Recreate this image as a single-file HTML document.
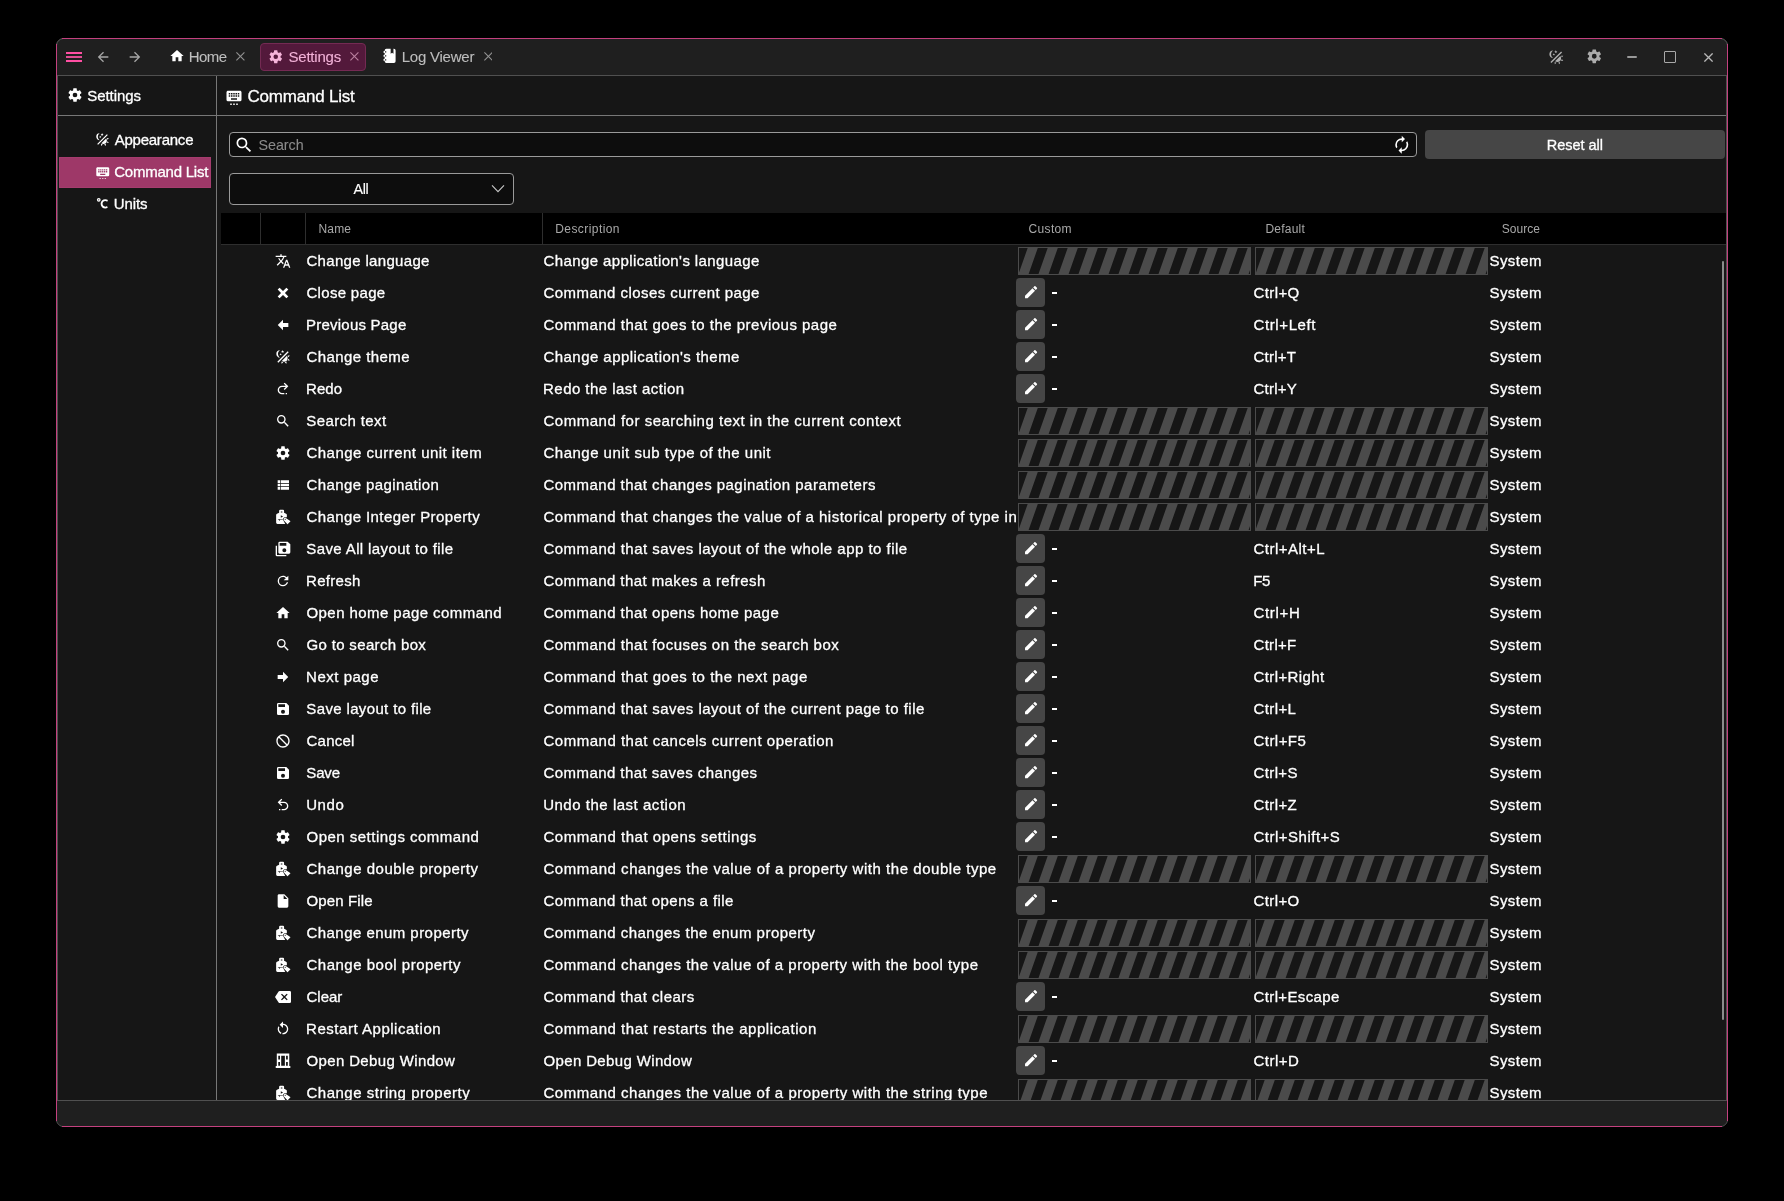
<!DOCTYPE html><html><head><meta charset="utf-8"><title>Settings</title><style>
*{box-sizing:border-box;margin:0;padding:0}
html,body{width:1784px;height:1201px;background:#000;overflow:hidden}
body{font-family:"Liberation Sans",sans-serif;font-size:15px;color:#fff;position:relative}
.abs{position:absolute}
svg.ic{position:absolute;display:block}
#win{position:absolute;left:56px;top:38px;width:1672px;height:1089px;border:1px solid #5c5c5c;border-radius:7.5px;background:#1f1f1f;overflow:hidden}
#winin{will-change:transform;position:absolute;left:-57px;top:-39px;width:1784px;height:1201px}
#content{position:absolute;left:57px;top:75px;width:1670px;height:1026px;background:#161616;border:1px solid #505050}
.hl{position:absolute;background:#777;height:1px}
.vl{position:absolute;background:#777;width:1px}
.t{position:absolute;white-space:nowrap;line-height:20px;height:20px;-webkit-text-stroke:0.3px currentColor}
.tab{position:absolute;top:43px;height:28px}
#thead{position:absolute;left:221px;top:213px;width:1505px;height:31px;background:#000}
#thead .t{font-size:12px;color:#a8a8a8;-webkit-text-stroke-width:0}
#thead i{position:absolute;top:0;width:1px;height:32px;background:#2e2e2e}
#tline{position:absolute;left:221px;top:244px;width:1505px;height:1px;background:#2e2e2e}
#rows{position:absolute;left:221px;top:245px;width:1505px;height:855px;overflow:hidden}
.r{position:absolute;left:0;width:1505px;height:32px}
.r .t{top:5.5px}
.r svg.ic{left:54px;top:8px}
.hb{position:absolute;top:2px;width:233px;height:28px;border:1px solid #4b4b4b;background:#161616;overflow:hidden}
.hb:before{content:"";position:absolute;left:-40px;top:0;width:340px;height:26px;transform-origin:0 100%;transform:skewX(-19.44deg);background:repeating-linear-gradient(90deg,#4b4b4b 0,#4b4b4b 9.1px,transparent 10.1px,transparent 19px,#4b4b4b 20px);}
.eb{position:absolute;left:795.1px;top:0.95px;width:29.3px;height:29.4px;border-radius:4px;background:#464646}
.eb svg.ic{left:6.6px;top:5.7px}
</style></head><body>
<div id="win"><div id="winin">
<div class="abs" style="left:66px;top:52px;width:16px;height:2px;background:#ff4fa3"></div>
<div class="abs" style="left:66px;top:56px;width:16px;height:2px;background:#e04c94"></div>
<div class="abs" style="left:66px;top:60px;width:16px;height:2px;background:#ff4fa3"></div>
<svg class="ic" style="width:16px;height:16px;left:95px;top:49.05px" viewBox="0 0 24 24"><path fill="#a6a6a6" fill-rule="evenodd" d="M20,11V13H8L13.5,18.5L12.08,19.92L4.16,12L12.08,4.08L13.5,5.5L8,11H20Z"/></svg>
<svg class="ic" style="width:16px;height:16px;left:126.75px;top:49.05px" viewBox="0 0 24 24"><path fill="#a6a6a6" fill-rule="evenodd" d="M4,11V13H16L10.5,18.5L11.92,19.92L19.84,12L11.92,4.08L10.5,5.5L16,11H4Z"/></svg>
<svg class="ic" style="width:16px;height:16px;left:168.9px;top:47.6px" viewBox="0 0 24 24"><path fill="#fff" fill-rule="evenodd" d="M10,20V14H14V20H19V12H22L12,3L2,12H5V20H10Z"/></svg>
<div class="t" style="left:188.85px;top:47px;letter-spacing:-0.599px;color:#bdbdbd;-webkit-text-stroke-width:0.1px">Home</div>
<svg class="ic" style="left:235.85px;top:52.10px;width:8.80px;height:8.80px" viewBox="0 0 8.80 8.80"><path d="M0.4,0.4L8.40,8.40M8.40,0.4L0.4,8.40" stroke="#929292" stroke-width="1.1" fill="none"/></svg>
<div class="abs" style="left:260px;top:43px;width:106px;height:28px;background:#53193b;border:1px solid #742a53;border-radius:4px"></div>
<svg class="ic" style="width:15.5px;height:15.5px;left:268.3px;top:48.6px" viewBox="0 0 24 24"><path fill="#f6b4da" fill-rule="evenodd" d="M12,15.5A3.5,3.5 0 0,1 8.5,12A3.5,3.5 0 0,1 12,8.5A3.5,3.5 0 0,1 15.5,12A3.5,3.5 0 0,1 12,15.5M19.43,12.97C19.47,12.65 19.5,12.33 19.5,12C19.5,11.67 19.47,11.34 19.43,11L21.54,9.37C21.73,9.22 21.78,8.95 21.66,8.73L19.66,5.27C19.54,5.05 19.27,4.96 19.05,5.05L16.56,6.05C16.04,5.66 15.5,5.32 14.87,5.07L14.5,2.42C14.46,2.18 14.25,2 14,2H10C9.75,2 9.54,2.18 9.5,2.42L9.13,5.07C8.5,5.32 7.96,5.66 7.44,6.05L4.95,5.05C4.73,4.96 4.46,5.05 4.34,5.27L2.34,8.73C2.21,8.95 2.27,9.22 2.46,9.37L4.57,11C4.53,11.34 4.5,11.67 4.5,12C4.5,12.33 4.53,12.65 4.57,12.97L2.46,14.63C2.27,14.78 2.21,15.05 2.34,15.27L4.34,18.73C4.46,18.95 4.73,19.03 4.95,18.95L7.44,17.94C7.96,18.34 8.5,18.68 9.13,18.93L9.5,21.58C9.54,21.82 9.75,22 10,22H14C14.25,22 14.46,21.82 14.5,21.58L14.87,18.93C15.5,18.67 16.04,18.34 16.56,17.94L19.05,18.95C19.27,19.03 19.54,18.95 19.66,18.73L21.66,15.27C21.78,15.05 21.73,14.78 21.54,14.63L19.43,12.97Z"/></svg>
<div class="t" style="left:288.43px;top:47px;letter-spacing:-0.193px;color:#f3b2d8;-webkit-text-stroke-width:0.1px">Settings</div>
<svg class="ic" style="left:349.80px;top:52.10px;width:8.80px;height:8.80px" viewBox="0 0 8.80 8.80"><path d="M0.4,0.4L8.40,8.40M8.40,0.4L0.4,8.40" stroke="#b9809f" stroke-width="1.1" fill="none"/></svg>
<svg class="ic" style="width:16px;height:16px;left:380.8px;top:48px" viewBox="0 0 24 24"><path fill="#fff" fill-rule="evenodd" d="M8,1.2H14.5V8.7L16.6,7.2L18.7,8.7V1.2H19.4A2.5,2.5 0 0,1 21.9,3.7V20A2.5,2.5 0 0,1 19.4,22.5H8A2.5,2.5 0 0,1 5.5,20V19.3H4.6A0.9,0.9 0 0,1 3.7,18.4V17.2A0.9,0.9 0 0,1 4.6,16.3H5.5V13.3H4.6A0.9,0.9 0 0,1 3.7,12.4V11.2A0.9,0.9 0 0,1 4.6,10.3H5.5V7.35H4.6A0.9,0.9 0 0,1 3.7,6.45V5.25A0.9,0.9 0 0,1 4.6,4.35H5.5V3.7A2.5,2.5 0 0,1 8,1.2ZM6,4.95H7.9V6.75H6ZM6,10.9H7.9V12.7H6ZM6,16.9H7.9V18.7H6Z"/></svg>
<div class="t" style="left:401.75px;top:47px;letter-spacing:-0.238px;color:#bdbdbd;-webkit-text-stroke-width:0.1px">Log Viewer</div>
<svg class="ic" style="left:483.60px;top:52.10px;width:8.80px;height:8.80px" viewBox="0 0 8.80 8.80"><path d="M0.4,0.4L8.40,8.40M8.40,0.4L0.4,8.40" stroke="#929292" stroke-width="1.1" fill="none"/></svg>
<svg class="ic" style="width:16.5px;height:16.5px;left:1547.7px;top:48.9px" viewBox="0 0 24 24"><path fill="#b0b0b0" fill-rule="evenodd" d="M7.5,2C5.71,3.15 4.5,5.18 4.5,7.5C4.5,9.82 5.71,11.85 7.53,13C4.46,13 2,10.54 2,7.5A5.5,5.5 0 0,1 7.5,2M19.07,3.5L20.5,4.93L4.93,20.5L3.5,19.07L19.07,3.5M12.89,5.93L11.41,5L9.97,6L10.39,4.3L9,3.24L10.75,3.12L11.33,1.47L12,3.1L13.73,3.13L12.38,4.26L12.89,5.93M9.59,9.54L8.43,8.81L7.31,9.59L7.65,8.27L6.56,7.44L7.92,7.35L8.37,6.06L8.88,7.33L10.24,7.36L9.19,8.23L9.59,9.54M19,13.5A5.5,5.5 0 0,1 13.5,19C12.28,19 11.15,18.6 10.24,17.93L17.93,10.24C18.6,11.15 19,12.28 19,13.5M14.6,20.08L17.37,18.93L17.13,22.28L14.6,20.08M18.93,17.38L20.08,14.61L22.28,17.15L18.93,17.38M20.08,12.42L18.94,9.64L22.28,9.88L20.08,12.42M9.63,18.93L12.4,20.08L9.87,22.27L9.63,18.93Z"/></svg>
<svg class="ic" style="width:16.5px;height:16.5px;left:1585.9px;top:48.2px" viewBox="0 0 24 24"><path fill="#acacac" fill-rule="evenodd" d="M12,15.5A3.5,3.5 0 0,1 8.5,12A3.5,3.5 0 0,1 12,8.5A3.5,3.5 0 0,1 15.5,12A3.5,3.5 0 0,1 12,15.5M19.43,12.97C19.47,12.65 19.5,12.33 19.5,12C19.5,11.67 19.47,11.34 19.43,11L21.54,9.37C21.73,9.22 21.78,8.95 21.66,8.73L19.66,5.27C19.54,5.05 19.27,4.96 19.05,5.05L16.56,6.05C16.04,5.66 15.5,5.32 14.87,5.07L14.5,2.42C14.46,2.18 14.25,2 14,2H10C9.75,2 9.54,2.18 9.5,2.42L9.13,5.07C8.5,5.32 7.96,5.66 7.44,6.05L4.95,5.05C4.73,4.96 4.46,5.05 4.34,5.27L2.34,8.73C2.21,8.95 2.27,9.22 2.46,9.37L4.57,11C4.53,11.34 4.5,11.67 4.5,12C4.5,12.33 4.53,12.65 4.57,12.97L2.46,14.63C2.27,14.78 2.21,15.05 2.34,15.27L4.34,18.73C4.46,18.95 4.73,19.03 4.95,18.95L7.44,17.94C7.96,18.34 8.5,18.68 9.13,18.93L9.5,21.58C9.54,21.82 9.75,22 10,22H14C14.25,22 14.46,21.82 14.5,21.58L14.87,18.93C15.5,18.67 16.04,18.34 16.56,17.94L19.05,18.95C19.27,19.03 19.54,18.95 19.66,18.73L21.66,15.27C21.78,15.05 21.73,14.78 21.54,14.63L19.43,12.97Z"/></svg>
<div class="abs" style="left:1627px;top:55.9px;width:10px;height:2px;background:#999;border-radius:1px"></div>
<div class="abs" style="left:1663.9px;top:50.9px;width:12.2px;height:12.2px;border:1.2px solid #a8a8a8;border-radius:1px"></div>
<svg class="ic" style="left:1704.00px;top:52.75px;width:9.00px;height:9.00px" viewBox="0 0 9.00 9.00"><path d="M0.4,0.4L8.60,8.60M8.60,0.4L0.4,8.60" stroke="#b8b8b8" stroke-width="1.3" fill="none"/></svg>
<div id="content"></div>
<div class="hl" style="left:58px;top:115px;width:1668px"></div>
<div class="vl" style="left:216px;top:76px;height:1024px"></div>
<svg class="ic" style="width:16px;height:16px;left:67px;top:87px" viewBox="0 0 24 24"><path fill="#fff" fill-rule="evenodd" d="M12,15.5A3.5,3.5 0 0,1 8.5,12A3.5,3.5 0 0,1 12,8.5A3.5,3.5 0 0,1 15.5,12A3.5,3.5 0 0,1 12,15.5M19.43,12.97C19.47,12.65 19.5,12.33 19.5,12C19.5,11.67 19.47,11.34 19.43,11L21.54,9.37C21.73,9.22 21.78,8.95 21.66,8.73L19.66,5.27C19.54,5.05 19.27,4.96 19.05,5.05L16.56,6.05C16.04,5.66 15.5,5.32 14.87,5.07L14.5,2.42C14.46,2.18 14.25,2 14,2H10C9.75,2 9.54,2.18 9.5,2.42L9.13,5.07C8.5,5.32 7.96,5.66 7.44,6.05L4.95,5.05C4.73,4.96 4.46,5.05 4.34,5.27L2.34,8.73C2.21,8.95 2.27,9.22 2.46,9.37L4.57,11C4.53,11.34 4.5,11.67 4.5,12C4.5,12.33 4.53,12.65 4.57,12.97L2.46,14.63C2.27,14.78 2.21,15.05 2.34,15.27L4.34,18.73C4.46,18.95 4.73,19.03 4.95,18.95L7.44,17.94C7.96,18.34 8.5,18.68 9.13,18.93L9.5,21.58C9.54,21.82 9.75,22 10,22H14C14.25,22 14.46,21.82 14.5,21.58L14.87,18.93C15.5,18.67 16.04,18.34 16.56,17.94L19.05,18.95C19.27,19.03 19.54,18.95 19.66,18.73L21.66,15.27C21.78,15.05 21.73,14.78 21.54,14.63L19.43,12.97Z"/></svg>
<div class="t" style="left:87.23px;top:86px;letter-spacing:-0.054px;">Settings</div>
<div class="abs" style="left:58.6px;top:156.5px;width:152.4px;height:31px;background:#9e3868;box-shadow:inset 0 0 0 1px #a53c6e"></div>
<svg class="ic" style="width:15px;height:15px;left:94.75px;top:132.2px" viewBox="0 0 24 24"><path fill="#fff" fill-rule="evenodd" d="M7.5,2C5.71,3.15 4.5,5.18 4.5,7.5C4.5,9.82 5.71,11.85 7.53,13C4.46,13 2,10.54 2,7.5A5.5,5.5 0 0,1 7.5,2M19.07,3.5L20.5,4.93L4.93,20.5L3.5,19.07L19.07,3.5M12.89,5.93L11.41,5L9.97,6L10.39,4.3L9,3.24L10.75,3.12L11.33,1.47L12,3.1L13.73,3.13L12.38,4.26L12.89,5.93M9.59,9.54L8.43,8.81L7.31,9.59L7.65,8.27L6.56,7.44L7.92,7.35L8.37,6.06L8.88,7.33L10.24,7.36L9.19,8.23L9.59,9.54M19,13.5A5.5,5.5 0 0,1 13.5,19C12.28,19 11.15,18.6 10.24,17.93L17.93,10.24C18.6,11.15 19,12.28 19,13.5M14.6,20.08L17.37,18.93L17.13,22.28L14.6,20.08M18.93,17.38L20.08,14.61L22.28,17.15L18.93,17.38M20.08,12.42L18.94,9.64L22.28,9.88L20.08,12.42M9.63,18.93L12.4,20.08L9.87,22.27L9.63,18.93Z"/></svg>
<div class="t" style="left:114.65px;top:130px;letter-spacing:-0.228px;">Appearance</div>
<svg class="ic" style="width:15.5px;height:15.5px;left:94.7px;top:163.75px" viewBox="0 0 24 24"><path fill="#fff" fill-rule="evenodd" d="M19,10H17V8H19M19,13H17V11H19M16,10H14V8H16M16,13H14V11H16M16,17H8V15H16M7,10H5V8H7M7,13H5V11H7M8,11H10V13H8M8,8H10V10H8M11,11H13V13H11M11,8H13V10H11M20,5H4C2.89,5 2,5.89 2,7V17A2,2 0 0,0 4,19H20A2,2 0 0,0 22,17V7C22,5.89 21.1,5 20,5M7,22H9V24H7V22M11,22H13V24H11V22M15,22H17V24H15V22Z"/></svg>
<div class="t" style="left:114.28px;top:162px;letter-spacing:-0.235px;">Command List</div>
<svg class="ic" style="width:15px;height:15px;left:95.1px;top:196.1px" viewBox="0 0 24 24"><path fill="#fff" fill-rule="evenodd" d="M16.5,5C18.05,5 19.5,5.47 20.69,6.28L19.53,9.17C18.73,8.44 17.67,8 16.5,8C14,8 12,10 12,12.5C12,15 14,17 16.5,17C17.53,17 18.47,16.66 19.23,16.08L20.37,18.93C19.24,19.61 17.92,20 16.5,20A7.5,7.5 0 0,1 9,12.5A7.5,7.5 0 0,1 16.5,5M6,3A3,3 0 0,1 9,6A3,3 0 0,1 6,9A3,3 0 0,1 3,6A3,3 0 0,1 6,3M6,5A1,1 0 0,0 5,6A1,1 0 0,0 6,7A1,1 0 0,0 7,6A1,1 0 0,0 6,5Z"/></svg>
<div class="t" style="left:113.84px;top:194px;letter-spacing:-0.127px;">Units</div>
<svg class="ic" style="width:18px;height:18px;left:225px;top:86.5px" viewBox="0 0 24 24"><path fill="#fff" fill-rule="evenodd" d="M19,10H17V8H19M19,13H17V11H19M16,10H14V8H16M16,13H14V11H16M16,17H8V15H16M7,10H5V8H7M7,13H5V11H7M8,11H10V13H8M8,8H10V10H8M11,11H13V13H11M11,8H13V10H11M20,5H4C2.89,5 2,5.89 2,7V17A2,2 0 0,0 4,19H20A2,2 0 0,0 22,17V7C22,5.89 21.1,5 20,5M7,22H9V24H7V22M11,22H13V24H11V22M15,22H17V24H15V22Z"/></svg>
<div class="t" style="left:247.45px;top:87px;letter-spacing:-0.207px;font-size:17px">Command List</div>
<div class="abs" style="left:229px;top:132px;width:1188px;height:25px;background:#0d0d0d;border:1px solid #9a9a9a;border-radius:4px"></div>
<svg class="ic" style="width:20px;height:20px;left:233.8px;top:134.9px" viewBox="0 0 24 24"><path fill="#fff" fill-rule="evenodd" d="M9.5,3A6.5,6.5 0 0,1 16,9.5C16,11.11 15.41,12.59 14.44,13.73L14.71,14H15.5L20.5,19L19,20.5L14,15.5V14.71L13.73,14.44C12.59,15.41 11.11,16 9.5,16A6.5,6.5 0 0,1 3,9.5A6.5,6.5 0 0,1 9.5,3M9.5,5C7,5 5,7 5,9.5C5,12 7,14 9.5,14C12,14 14,12 14,9.5C14,7 12,5 9.5,5Z"/></svg>
<div class="t" style="left:258.57px;top:134.5px;letter-spacing:-0.053px;font-size:14.3px;color:#8a8a8a;-webkit-text-stroke-width:0.1px">Search</div>
<svg class="ic" style="width:19.5px;height:19.5px;left:1392.3px;top:135.2px" viewBox="0 0 24 24"><path fill="#fff" fill-rule="evenodd" d="M12,6V9L16,5L12,1V4A8,8 0 0,0 4,12C4,13.57 4.46,15.03 5.24,16.26L6.7,14.8C6.25,13.97 6,13 6,12A6,6 0 0,1 12,6M18.76,7.74L17.3,9.2C17.74,10.04 18,11 18,12A6,6 0 0,1 12,18V15L8,19L12,23V20A8,8 0 0,0 20,12C20,10.43 19.54,8.97 18.76,7.74Z"/></svg>
<div class="abs" style="left:1425.1px;top:130.3px;width:300.4px;height:29.2px;background:#464646;border-radius:4px"></div>
<div class="t" style="left:1546.68px;top:134.5px;letter-spacing:-0.013px;font-size:14.5px">Reset all</div>
<div class="abs" style="left:229px;top:173px;width:285px;height:32px;background:#0d0d0d;border:1px solid #9a9a9a;border-radius:4px"></div>
<div class="t" style="left:353.45px;top:179px;letter-spacing:-0.325px;font-size:14.3px;-webkit-text-stroke-width:0.15px">All</div>
<svg class="ic" style="left:490px;top:183px;width:16px;height:12px" viewBox="0 0 16 12"><path d="M2,2.3L8,8.6L14,2.3" stroke="#c8c8c8" stroke-width="1.1" fill="none"/></svg>
<div id="thead"><i style="left:39px"></i><i style="left:84px"></i><i style="left:321px"></i>
<div class="t" style="left:97.39px;top:5.5px;letter-spacing:0.210px;">Name</div>
<div class="t" style="left:334.29px;top:5.5px;letter-spacing:0.417px;">Description</div>
<div class="t" style="left:807.58px;top:5.5px;letter-spacing:0.321px;">Custom</div>
<div class="t" style="left:1044.49px;top:5.5px;letter-spacing:0.201px;">Default</div>
<div class="t" style="left:1280.64px;top:5.5px;letter-spacing:0.061px;">Source</div>
</div><div id="tline"></div>
<div id="rows">
<div class="r" style="top:0px">
<svg class="ic" style="width:16px;height:16px;" viewBox="0 0 24 24"><path fill="#fff" fill-rule="evenodd" d="M12.87,15.07L10.33,12.56L10.36,12.53C12.1,10.59 13.34,8.36 14.07,6H17V4H10V2H8V4H1V6H12.17C11.5,7.92 10.44,9.75 9,11.35C8.07,10.32 7.3,9.19 6.69,8H4.69C5.42,9.63 6.42,11.17 7.67,12.56L2.58,17.58L4,19L9,14L12.11,17.11L12.87,15.07M18.5,10H16.5L12,22H14L15.12,19H19.87L21,22H23L18.5,10M15.88,17L17.5,12.67L19.12,17H15.88Z"/></svg>
<div class="t" style="left:85.48px;top:5.5px;letter-spacing:0.321px;">Change language</div>
<div class="t" style="left:322.48px;top:5.5px;letter-spacing:0.401px;width:472.52px;overflow:hidden">Change application's language</div>
<div class="hb" style="left:797px"></div><div class="hb" style="left:1034px"></div>
<div class="t" style="left:1268.53px;top:5.5px;letter-spacing:0.399px;">System</div>
</div>
<div class="r" style="top:32px">
<svg class="ic" style="width:16px;height:16px;" viewBox="0 0 24 24"><path fill="#fff" fill-rule="evenodd" d="M20 6.91L17.09 4L12 9.09L6.91 4L4 6.91L9.09 12L4 17.09L6.91 20L12 14.91L17.09 20L20 17.09L14.91 12L20 6.91Z"/></svg>
<div class="t" style="left:85.48px;top:5.5px;letter-spacing:0.313px;">Close page</div>
<div class="t" style="left:322.48px;top:5.5px;letter-spacing:0.451px;width:472.52px;overflow:hidden">Command closes current page</div>
<div class="eb"><svg class="ic" style="width:16.2px;height:16.2px;" viewBox="0 0 24 24"><path fill="#fff" fill-rule="evenodd" d="M20.71,7.04C21.1,6.65 21.1,6 20.71,5.63L18.37,3.29C18,2.9 17.35,2.9 16.96,3.29L15.12,5.12L18.87,8.87M3,17.25V21H6.75L17.81,9.93L14.06,6.18L3,17.25Z"/></svg></div>
<div class="abs" style="left:831px;top:15.3px;width:5.3px;height:1.6px;background:#fff"></div>
<div class="t" style="left:1032.53px;top:5.5px;letter-spacing:0.402px;">Ctrl+Q</div>
<div class="t" style="left:1268.53px;top:5.5px;letter-spacing:0.399px;">System</div>
</div>
<div class="r" style="top:64px">
<svg class="ic" style="width:16px;height:16px;" viewBox="0 0 24 24"><path fill="#fff" fill-rule="evenodd" d="M20,9V15H12V19.84L4.16,12L12,4.16V9H20Z"/></svg>
<div class="t" style="left:85.10px;top:5.5px;letter-spacing:0.218px;">Previous Page</div>
<div class="t" style="left:322.48px;top:5.5px;letter-spacing:0.493px;width:472.52px;overflow:hidden">Command that goes to the previous page</div>
<div class="eb"><svg class="ic" style="width:16.2px;height:16.2px;" viewBox="0 0 24 24"><path fill="#fff" fill-rule="evenodd" d="M20.71,7.04C21.1,6.65 21.1,6 20.71,5.63L18.37,3.29C18,2.9 17.35,2.9 16.96,3.29L15.12,5.12L18.87,8.87M3,17.25V21H6.75L17.81,9.93L14.06,6.18L3,17.25Z"/></svg></div>
<div class="abs" style="left:831px;top:15.3px;width:5.3px;height:1.6px;background:#fff"></div>
<div class="t" style="left:1032.53px;top:5.5px;letter-spacing:0.607px;">Ctrl+Left</div>
<div class="t" style="left:1268.53px;top:5.5px;letter-spacing:0.399px;">System</div>
</div>
<div class="r" style="top:96px">
<svg class="ic" style="width:16px;height:16px;" viewBox="0 0 24 24"><path fill="#fff" fill-rule="evenodd" d="M7.5,2C5.71,3.15 4.5,5.18 4.5,7.5C4.5,9.82 5.71,11.85 7.53,13C4.46,13 2,10.54 2,7.5A5.5,5.5 0 0,1 7.5,2M19.07,3.5L20.5,4.93L4.93,20.5L3.5,19.07L19.07,3.5M12.89,5.93L11.41,5L9.97,6L10.39,4.3L9,3.24L10.75,3.12L11.33,1.47L12,3.1L13.73,3.13L12.38,4.26L12.89,5.93M9.59,9.54L8.43,8.81L7.31,9.59L7.65,8.27L6.56,7.44L7.92,7.35L8.37,6.06L8.88,7.33L10.24,7.36L9.19,8.23L9.59,9.54M19,13.5A5.5,5.5 0 0,1 13.5,19C12.28,19 11.15,18.6 10.24,17.93L17.93,10.24C18.6,11.15 19,12.28 19,13.5M14.6,20.08L17.37,18.93L17.13,22.28L14.6,20.08M18.93,17.38L20.08,14.61L22.28,17.15L18.93,17.38M20.08,12.42L18.94,9.64L22.28,9.88L20.08,12.42M9.63,18.93L12.4,20.08L9.87,22.27L9.63,18.93Z"/></svg>
<div class="t" style="left:85.48px;top:5.5px;letter-spacing:0.423px;">Change theme</div>
<div class="t" style="left:322.48px;top:5.5px;letter-spacing:0.453px;width:472.52px;overflow:hidden">Change application's theme</div>
<div class="eb"><svg class="ic" style="width:16.2px;height:16.2px;" viewBox="0 0 24 24"><path fill="#fff" fill-rule="evenodd" d="M20.71,7.04C21.1,6.65 21.1,6 20.71,5.63L18.37,3.29C18,2.9 17.35,2.9 16.96,3.29L15.12,5.12L18.87,8.87M3,17.25V21H6.75L17.81,9.93L14.06,6.18L3,17.25Z"/></svg></div>
<div class="abs" style="left:831px;top:15.3px;width:5.3px;height:1.6px;background:#fff"></div>
<div class="t" style="left:1032.53px;top:5.5px;letter-spacing:0.241px;">Ctrl+T</div>
<div class="t" style="left:1268.53px;top:5.5px;letter-spacing:0.399px;">System</div>
</div>
<div class="r" style="top:128px">
<svg class="ic" style="width:16px;height:16px;" viewBox="0 0 24 24"><path fill="#fff" fill-rule="evenodd" d="M10.5,7A6.5,6.5 0 0,0 4,13.5A6.5,6.5 0 0,0 10.5,20H14V18H10.5C8,18 6,16 6,13.5C6,11 8,9 10.5,9H16.17L13.09,12.09L14.5,13.5L20,8L14.5,2.5L13.08,3.91L16.17,7H10.5M18,18H16V20H18V18Z"/></svg>
<div class="t" style="left:85.10px;top:5.5px;letter-spacing:0.006px;">Redo</div>
<div class="t" style="left:322.10px;top:5.5px;letter-spacing:0.448px;width:472.90px;overflow:hidden">Redo the last action</div>
<div class="eb"><svg class="ic" style="width:16.2px;height:16.2px;" viewBox="0 0 24 24"><path fill="#fff" fill-rule="evenodd" d="M20.71,7.04C21.1,6.65 21.1,6 20.71,5.63L18.37,3.29C18,2.9 17.35,2.9 16.96,3.29L15.12,5.12L18.87,8.87M3,17.25V21H6.75L17.81,9.93L14.06,6.18L3,17.25Z"/></svg></div>
<div class="abs" style="left:831px;top:15.3px;width:5.3px;height:1.6px;background:#fff"></div>
<div class="t" style="left:1032.53px;top:5.5px;letter-spacing:0.214px;">Ctrl+Y</div>
<div class="t" style="left:1268.53px;top:5.5px;letter-spacing:0.399px;">System</div>
</div>
<div class="r" style="top:160px">
<svg class="ic" style="width:16px;height:16px;" viewBox="0 0 24 24"><path fill="#fff" fill-rule="evenodd" d="M9.5,3A6.5,6.5 0 0,1 16,9.5C16,11.11 15.41,12.59 14.44,13.73L14.71,14H15.5L20.5,19L19,20.5L14,15.5V14.71L13.73,14.44C12.59,15.41 11.11,16 9.5,16A6.5,6.5 0 0,1 3,9.5A6.5,6.5 0 0,1 9.5,3M9.5,5C7,5 5,7 5,9.5C5,12 7,14 9.5,14C12,14 14,12 14,9.5C14,7 12,5 9.5,5Z"/></svg>
<div class="t" style="left:85.33px;top:5.5px;letter-spacing:0.397px;">Search text</div>
<div class="t" style="left:322.48px;top:5.5px;letter-spacing:0.511px;width:472.52px;overflow:hidden">Command for searching text in the current context</div>
<div class="hb" style="left:797px"></div><div class="hb" style="left:1034px"></div>
<div class="t" style="left:1268.53px;top:5.5px;letter-spacing:0.399px;">System</div>
</div>
<div class="r" style="top:192px">
<svg class="ic" style="width:16px;height:16px;" viewBox="0 0 24 24"><path fill="#fff" fill-rule="evenodd" d="M12,15.5A3.5,3.5 0 0,1 8.5,12A3.5,3.5 0 0,1 12,8.5A3.5,3.5 0 0,1 15.5,12A3.5,3.5 0 0,1 12,15.5M19.43,12.97C19.47,12.65 19.5,12.33 19.5,12C19.5,11.67 19.47,11.34 19.43,11L21.54,9.37C21.73,9.22 21.78,8.95 21.66,8.73L19.66,5.27C19.54,5.05 19.27,4.96 19.05,5.05L16.56,6.05C16.04,5.66 15.5,5.32 14.87,5.07L14.5,2.42C14.46,2.18 14.25,2 14,2H10C9.75,2 9.54,2.18 9.5,2.42L9.13,5.07C8.5,5.32 7.96,5.66 7.44,6.05L4.95,5.05C4.73,4.96 4.46,5.05 4.34,5.27L2.34,8.73C2.21,8.95 2.27,9.22 2.46,9.37L4.57,11C4.53,11.34 4.5,11.67 4.5,12C4.5,12.33 4.53,12.65 4.57,12.97L2.46,14.63C2.27,14.78 2.21,15.05 2.34,15.27L4.34,18.73C4.46,18.95 4.73,19.03 4.95,18.95L7.44,17.94C7.96,18.34 8.5,18.68 9.13,18.93L9.5,21.58C9.54,21.82 9.75,22 10,22H14C14.25,22 14.46,21.82 14.5,21.58L14.87,18.93C15.5,18.67 16.04,18.34 16.56,17.94L19.05,18.95C19.27,19.03 19.54,18.95 19.66,18.73L21.66,15.27C21.78,15.05 21.73,14.78 21.54,14.63L19.43,12.97Z"/></svg>
<div class="t" style="left:85.48px;top:5.5px;letter-spacing:0.474px;">Change current unit item</div>
<div class="t" style="left:322.48px;top:5.5px;letter-spacing:0.491px;width:472.52px;overflow:hidden">Change unit sub type of the unit</div>
<div class="hb" style="left:797px"></div><div class="hb" style="left:1034px"></div>
<div class="t" style="left:1268.53px;top:5.5px;letter-spacing:0.399px;">System</div>
</div>
<div class="r" style="top:224px">
<svg class="ic" style="width:16px;height:16px;" viewBox="0 0 24 24"><path fill="#fff" fill-rule="evenodd" d="M9,5V9H21V5M9,19H21V15H9M9,14H21V10H9M4,9H8V5H4M4,19H8V15H4M4,14H8V10H4V14Z"/></svg>
<div class="t" style="left:85.48px;top:5.5px;letter-spacing:0.399px;">Change pagination</div>
<div class="t" style="left:322.48px;top:5.5px;letter-spacing:0.469px;width:472.52px;overflow:hidden">Command that changes pagination parameters</div>
<div class="hb" style="left:797px"></div><div class="hb" style="left:1034px"></div>
<div class="t" style="left:1268.53px;top:5.5px;letter-spacing:0.399px;">System</div>
</div>
<div class="r" style="top:256px">
<svg class="ic" style="width:16px;height:16px;" viewBox="0 0 24 24"><path fill="#fff" fill-rule="evenodd" d="M7.8,1.3H12A1.6,1.6 0 0,1 13.6,2.9V5.5L16.6,7A2,2 0 0,1 17.8,8.8V12.2L14.7,12.5A3.1,3.1 0 0,0 12.6,17.4L15.4,22.4H3.7A2,2 0 0,1 1.7,20.4V9A2,2 0 0,1 3,7.2L6.2,5.5V2.9A1.6,1.6 0 0,1 7.8,1.3ZM8.7,3.8V5.1H11.1V3.8ZM8.7,9.3L12.1,11.2L8.7,13.1ZM4.4,15.2H12L11.7,16.3H7.7L6.6,18L5.6,16.3H4.4ZM15.7,13.1L22.9,18A0.6,0.6 0 0,1 22.95,18.9L19.2,22.6A0.6,0.6 0 0,1 18.3,22.6L13.7,17.7A2.7,2.7 0 0,1 15.7,13.1ZM15.4,14.6A0.85,0.85 0 1,0 15.4,16.3A0.85,0.85 0 1,0 15.4,14.6Z"/></svg>
<div class="t" style="left:85.48px;top:5.5px;letter-spacing:0.407px;">Change Integer Property</div>
<div class="t" style="left:322.48px;top:5.5px;letter-spacing:0.496px;width:472.52px;overflow:hidden">Command that changes the value of a historical property of type integer</div>
<div class="hb" style="left:797px"></div><div class="hb" style="left:1034px"></div>
<div class="t" style="left:1268.53px;top:5.5px;letter-spacing:0.399px;">System</div>
</div>
<div class="r" style="top:288px">
<svg class="ic" style="width:16px;height:16px;" viewBox="0 0 24 24"><path fill="#fff" fill-rule="evenodd" d="M17,7V3H7V7H17M14,17A3,3 0 0,0 17,14A3,3 0 0,0 14,11A3,3 0 0,0 11,14A3,3 0 0,0 14,17M19,1L23,5V17A2,2 0 0,1 21,19H7C5.89,19 5,18.1 5,17V3A2,2 0 0,1 7,1H19M1,7H3V21H17V23H3A2,2 0 0,1 1,21V7Z"/></svg>
<div class="t" style="left:85.33px;top:5.5px;letter-spacing:0.378px;">Save All layout to file</div>
<div class="t" style="left:322.48px;top:5.5px;letter-spacing:0.480px;width:472.52px;overflow:hidden">Command that saves layout of the whole app to file</div>
<div class="eb"><svg class="ic" style="width:16.2px;height:16.2px;" viewBox="0 0 24 24"><path fill="#fff" fill-rule="evenodd" d="M20.71,7.04C21.1,6.65 21.1,6 20.71,5.63L18.37,3.29C18,2.9 17.35,2.9 16.96,3.29L15.12,5.12L18.87,8.87M3,17.25V21H6.75L17.81,9.93L14.06,6.18L3,17.25Z"/></svg></div>
<div class="abs" style="left:831px;top:15.3px;width:5.3px;height:1.6px;background:#fff"></div>
<div class="t" style="left:1032.53px;top:5.5px;letter-spacing:0.478px;">Ctrl+Alt+L</div>
<div class="t" style="left:1268.53px;top:5.5px;letter-spacing:0.399px;">System</div>
</div>
<div class="r" style="top:320px">
<svg class="ic" style="width:16px;height:16px;" viewBox="0 0 24 24"><path fill="#fff" fill-rule="evenodd" d="M17.65,6.35C16.2,4.9 14.21,4 12,4A8,8 0 0,0 4,12A8,8 0 0,0 12,20C15.73,20 18.84,17.45 19.73,14H17.65C16.83,16.33 14.61,18 12,18A6,6 0 0,1 6,12A6,6 0 0,1 12,6C13.66,6 15.14,6.69 16.22,7.78L13,11H20V4L17.65,6.35Z"/></svg>
<div class="t" style="left:85.10px;top:5.5px;letter-spacing:0.287px;">Refresh</div>
<div class="t" style="left:322.48px;top:5.5px;letter-spacing:0.432px;width:472.52px;overflow:hidden">Command that makes a refresh</div>
<div class="eb"><svg class="ic" style="width:16.2px;height:16.2px;" viewBox="0 0 24 24"><path fill="#fff" fill-rule="evenodd" d="M20.71,7.04C21.1,6.65 21.1,6 20.71,5.63L18.37,3.29C18,2.9 17.35,2.9 16.96,3.29L15.12,5.12L18.87,8.87M3,17.25V21H6.75L17.81,9.93L14.06,6.18L3,17.25Z"/></svg></div>
<div class="abs" style="left:831px;top:15.3px;width:5.3px;height:1.6px;background:#fff"></div>
<div class="t" style="left:1032.15px;top:5.5px;letter-spacing:-0.341px;">F5</div>
<div class="t" style="left:1268.53px;top:5.5px;letter-spacing:0.399px;">System</div>
</div>
<div class="r" style="top:352px">
<svg class="ic" style="width:16px;height:16px;" viewBox="0 0 24 24"><path fill="#fff" fill-rule="evenodd" d="M10,20V14H14V20H19V12H22L12,3L2,12H5V20H10Z"/></svg>
<div class="t" style="left:85.51px;top:5.5px;letter-spacing:0.432px;">Open home page command</div>
<div class="t" style="left:322.48px;top:5.5px;letter-spacing:0.469px;width:472.52px;overflow:hidden">Command that opens home page</div>
<div class="eb"><svg class="ic" style="width:16.2px;height:16.2px;" viewBox="0 0 24 24"><path fill="#fff" fill-rule="evenodd" d="M20.71,7.04C21.1,6.65 21.1,6 20.71,5.63L18.37,3.29C18,2.9 17.35,2.9 16.96,3.29L15.12,5.12L18.87,8.87M3,17.25V21H6.75L17.81,9.93L14.06,6.18L3,17.25Z"/></svg></div>
<div class="abs" style="left:831px;top:15.3px;width:5.3px;height:1.6px;background:#fff"></div>
<div class="t" style="left:1032.53px;top:5.5px;letter-spacing:0.668px;">Ctrl+H</div>
<div class="t" style="left:1268.53px;top:5.5px;letter-spacing:0.399px;">System</div>
</div>
<div class="r" style="top:384px">
<svg class="ic" style="width:16px;height:16px;" viewBox="0 0 24 24"><path fill="#fff" fill-rule="evenodd" d="M9.5,3A6.5,6.5 0 0,1 16,9.5C16,11.11 15.41,12.59 14.44,13.73L14.71,14H15.5L20.5,19L19,20.5L14,15.5V14.71L13.73,14.44C12.59,15.41 11.11,16 9.5,16A6.5,6.5 0 0,1 3,9.5A6.5,6.5 0 0,1 9.5,3M9.5,5C7,5 5,7 5,9.5C5,12 7,14 9.5,14C12,14 14,12 14,9.5C14,7 12,5 9.5,5Z"/></svg>
<div class="t" style="left:85.47px;top:5.5px;letter-spacing:0.341px;">Go to search box</div>
<div class="t" style="left:322.48px;top:5.5px;letter-spacing:0.476px;width:472.52px;overflow:hidden">Command that focuses on the search box</div>
<div class="eb"><svg class="ic" style="width:16.2px;height:16.2px;" viewBox="0 0 24 24"><path fill="#fff" fill-rule="evenodd" d="M20.71,7.04C21.1,6.65 21.1,6 20.71,5.63L18.37,3.29C18,2.9 17.35,2.9 16.96,3.29L15.12,5.12L18.87,8.87M3,17.25V21H6.75L17.81,9.93L14.06,6.18L3,17.25Z"/></svg></div>
<div class="abs" style="left:831px;top:15.3px;width:5.3px;height:1.6px;background:#fff"></div>
<div class="t" style="left:1032.53px;top:5.5px;letter-spacing:0.299px;">Ctrl+F</div>
<div class="t" style="left:1268.53px;top:5.5px;letter-spacing:0.399px;">System</div>
</div>
<div class="r" style="top:416px">
<svg class="ic" style="width:16px;height:16px;" viewBox="0 0 24 24"><path fill="#fff" fill-rule="evenodd" d="M4,15V9H12V4.16L19.84,12L12,19.84V15H4Z"/></svg>
<div class="t" style="left:85.10px;top:5.5px;letter-spacing:0.505px;">Next page</div>
<div class="t" style="left:322.48px;top:5.5px;letter-spacing:0.513px;width:472.52px;overflow:hidden">Command that goes to the next page</div>
<div class="eb"><svg class="ic" style="width:16.2px;height:16.2px;" viewBox="0 0 24 24"><path fill="#fff" fill-rule="evenodd" d="M20.71,7.04C21.1,6.65 21.1,6 20.71,5.63L18.37,3.29C18,2.9 17.35,2.9 16.96,3.29L15.12,5.12L18.87,8.87M3,17.25V21H6.75L17.81,9.93L14.06,6.18L3,17.25Z"/></svg></div>
<div class="abs" style="left:831px;top:15.3px;width:5.3px;height:1.6px;background:#fff"></div>
<div class="t" style="left:1032.53px;top:5.5px;letter-spacing:0.388px;">Ctrl+Right</div>
<div class="t" style="left:1268.53px;top:5.5px;letter-spacing:0.399px;">System</div>
</div>
<div class="r" style="top:448px">
<svg class="ic" style="width:16px;height:16px;" viewBox="0 0 24 24"><path fill="#fff" fill-rule="evenodd" d="M15,9H5V5H15M12,19A3,3 0 0,1 9,16A3,3 0 0,1 12,13A3,3 0 0,1 15,16A3,3 0 0,1 12,19M17,3H5C3.89,3 3,3.9 3,5V19A2,2 0 0,0 5,21H19A2,2 0 0,0 21,19V7L17,3Z"/></svg>
<div class="t" style="left:85.33px;top:5.5px;letter-spacing:0.358px;">Save layout to file</div>
<div class="t" style="left:322.48px;top:5.5px;letter-spacing:0.477px;width:472.52px;overflow:hidden">Command that saves layout of the current page to file</div>
<div class="eb"><svg class="ic" style="width:16.2px;height:16.2px;" viewBox="0 0 24 24"><path fill="#fff" fill-rule="evenodd" d="M20.71,7.04C21.1,6.65 21.1,6 20.71,5.63L18.37,3.29C18,2.9 17.35,2.9 16.96,3.29L15.12,5.12L18.87,8.87M3,17.25V21H6.75L17.81,9.93L14.06,6.18L3,17.25Z"/></svg></div>
<div class="abs" style="left:831px;top:15.3px;width:5.3px;height:1.6px;background:#fff"></div>
<div class="t" style="left:1032.53px;top:5.5px;letter-spacing:0.386px;">Ctrl+L</div>
<div class="t" style="left:1268.53px;top:5.5px;letter-spacing:0.399px;">System</div>
</div>
<div class="r" style="top:480px">
<svg class="ic" style="width:16px;height:16px;" viewBox="0 0 24 24"><path fill="#fff" fill-rule="evenodd" d="M12,2C17.5,2 22,6.5 22,12C22,17.5 17.5,22 12,22C6.5,22 2,17.5 2,12C2,6.5 6.5,2 12,2M12,4C10.1,4 8.4,4.6 7.1,5.7L18.3,16.9C19.3,15.5 20,13.8 20,12C20,7.6 16.4,4 12,4M16.9,18.3L5.7,7.1C4.6,8.4 4,10.1 4,12C4,16.4 7.6,20 12,20C13.9,20 15.6,19.4 16.9,18.3Z"/></svg>
<div class="t" style="left:85.48px;top:5.5px;letter-spacing:0.254px;">Cancel</div>
<div class="t" style="left:322.48px;top:5.5px;letter-spacing:0.513px;width:472.52px;overflow:hidden">Command that cancels current operation</div>
<div class="eb"><svg class="ic" style="width:16.2px;height:16.2px;" viewBox="0 0 24 24"><path fill="#fff" fill-rule="evenodd" d="M20.71,7.04C21.1,6.65 21.1,6 20.71,5.63L18.37,3.29C18,2.9 17.35,2.9 16.96,3.29L15.12,5.12L18.87,8.87M3,17.25V21H6.75L17.81,9.93L14.06,6.18L3,17.25Z"/></svg></div>
<div class="abs" style="left:831px;top:15.3px;width:5.3px;height:1.6px;background:#fff"></div>
<div class="t" style="left:1032.53px;top:5.5px;letter-spacing:0.453px;">Ctrl+F5</div>
<div class="t" style="left:1268.53px;top:5.5px;letter-spacing:0.399px;">System</div>
</div>
<div class="r" style="top:512px">
<svg class="ic" style="width:16px;height:16px;" viewBox="0 0 24 24"><path fill="#fff" fill-rule="evenodd" d="M15,9H5V5H15M12,19A3,3 0 0,1 9,16A3,3 0 0,1 12,13A3,3 0 0,1 15,16A3,3 0 0,1 12,19M17,3H5C3.89,3 3,3.9 3,5V19A2,2 0 0,0 5,21H19A2,2 0 0,0 21,19V7L17,3Z"/></svg>
<div class="t" style="left:85.33px;top:5.5px;letter-spacing:-0.179px;">Save</div>
<div class="t" style="left:322.48px;top:5.5px;letter-spacing:0.439px;width:472.52px;overflow:hidden">Command that saves changes</div>
<div class="eb"><svg class="ic" style="width:16.2px;height:16.2px;" viewBox="0 0 24 24"><path fill="#fff" fill-rule="evenodd" d="M20.71,7.04C21.1,6.65 21.1,6 20.71,5.63L18.37,3.29C18,2.9 17.35,2.9 16.96,3.29L15.12,5.12L18.87,8.87M3,17.25V21H6.75L17.81,9.93L14.06,6.18L3,17.25Z"/></svg></div>
<div class="abs" style="left:831px;top:15.3px;width:5.3px;height:1.6px;background:#fff"></div>
<div class="t" style="left:1032.53px;top:5.5px;letter-spacing:0.376px;">Ctrl+S</div>
<div class="t" style="left:1268.53px;top:5.5px;letter-spacing:0.399px;">System</div>
</div>
<div class="r" style="top:544px">
<svg class="ic" style="width:16px;height:16px;" viewBox="0 0 24 24"><path fill="#fff" fill-rule="evenodd" d="M13.5,7A6.5,6.5 0 0,1 20,13.5A6.5,6.5 0 0,1 13.5,20H10V18H13.5C16,18 18,16 18,13.5C18,11 16,9 13.5,9H7.83L10.91,12.09L9.5,13.5L4,8L9.5,2.5L10.92,3.91L7.83,7H13.5M6,18H8V20H6V18Z"/></svg>
<div class="t" style="left:85.14px;top:5.5px;letter-spacing:0.654px;">Undo</div>
<div class="t" style="left:322.14px;top:5.5px;letter-spacing:0.523px;width:472.86px;overflow:hidden">Undo the last action</div>
<div class="eb"><svg class="ic" style="width:16.2px;height:16.2px;" viewBox="0 0 24 24"><path fill="#fff" fill-rule="evenodd" d="M20.71,7.04C21.1,6.65 21.1,6 20.71,5.63L18.37,3.29C18,2.9 17.35,2.9 16.96,3.29L15.12,5.12L18.87,8.87M3,17.25V21H6.75L17.81,9.93L14.06,6.18L3,17.25Z"/></svg></div>
<div class="abs" style="left:831px;top:15.3px;width:5.3px;height:1.6px;background:#fff"></div>
<div class="t" style="left:1032.53px;top:5.5px;letter-spacing:0.389px;">Ctrl+Z</div>
<div class="t" style="left:1268.53px;top:5.5px;letter-spacing:0.399px;">System</div>
</div>
<div class="r" style="top:576px">
<svg class="ic" style="width:16px;height:16px;" viewBox="0 0 24 24"><path fill="#fff" fill-rule="evenodd" d="M12,15.5A3.5,3.5 0 0,1 8.5,12A3.5,3.5 0 0,1 12,8.5A3.5,3.5 0 0,1 15.5,12A3.5,3.5 0 0,1 12,15.5M19.43,12.97C19.47,12.65 19.5,12.33 19.5,12C19.5,11.67 19.47,11.34 19.43,11L21.54,9.37C21.73,9.22 21.78,8.95 21.66,8.73L19.66,5.27C19.54,5.05 19.27,4.96 19.05,5.05L16.56,6.05C16.04,5.66 15.5,5.32 14.87,5.07L14.5,2.42C14.46,2.18 14.25,2 14,2H10C9.75,2 9.54,2.18 9.5,2.42L9.13,5.07C8.5,5.32 7.96,5.66 7.44,6.05L4.95,5.05C4.73,4.96 4.46,5.05 4.34,5.27L2.34,8.73C2.21,8.95 2.27,9.22 2.46,9.37L4.57,11C4.53,11.34 4.5,11.67 4.5,12C4.5,12.33 4.53,12.65 4.57,12.97L2.46,14.63C2.27,14.78 2.21,15.05 2.34,15.27L4.34,18.73C4.46,18.95 4.73,19.03 4.95,18.95L7.44,17.94C7.96,18.34 8.5,18.68 9.13,18.93L9.5,21.58C9.54,21.82 9.75,22 10,22H14C14.25,22 14.46,21.82 14.5,21.58L14.87,18.93C15.5,18.67 16.04,18.34 16.56,17.94L19.05,18.95C19.27,19.03 19.54,18.95 19.66,18.73L21.66,15.27C21.78,15.05 21.73,14.78 21.54,14.63L19.43,12.97Z"/></svg>
<div class="t" style="left:85.51px;top:5.5px;letter-spacing:0.488px;">Open settings command</div>
<div class="t" style="left:322.48px;top:5.5px;letter-spacing:0.522px;width:472.52px;overflow:hidden">Command that opens settings</div>
<div class="eb"><svg class="ic" style="width:16.2px;height:16.2px;" viewBox="0 0 24 24"><path fill="#fff" fill-rule="evenodd" d="M20.71,7.04C21.1,6.65 21.1,6 20.71,5.63L18.37,3.29C18,2.9 17.35,2.9 16.96,3.29L15.12,5.12L18.87,8.87M3,17.25V21H6.75L17.81,9.93L14.06,6.18L3,17.25Z"/></svg></div>
<div class="abs" style="left:831px;top:15.3px;width:5.3px;height:1.6px;background:#fff"></div>
<div class="t" style="left:1032.53px;top:5.5px;letter-spacing:0.498px;">Ctrl+Shift+S</div>
<div class="t" style="left:1268.53px;top:5.5px;letter-spacing:0.399px;">System</div>
</div>
<div class="r" style="top:608px">
<svg class="ic" style="width:16px;height:16px;" viewBox="0 0 24 24"><path fill="#fff" fill-rule="evenodd" d="M7.8,1.3H12A1.6,1.6 0 0,1 13.6,2.9V5.5L16.6,7A2,2 0 0,1 17.8,8.8V12.2L14.7,12.5A3.1,3.1 0 0,0 12.6,17.4L15.4,22.4H3.7A2,2 0 0,1 1.7,20.4V9A2,2 0 0,1 3,7.2L6.2,5.5V2.9A1.6,1.6 0 0,1 7.8,1.3ZM8.7,3.8V5.1H11.1V3.8ZM8.7,9.3L12.1,11.2L8.7,13.1ZM4.4,15.2H12L11.7,16.3H7.7L6.6,18L5.6,16.3H4.4ZM15.7,13.1L22.9,18A0.6,0.6 0 0,1 22.95,18.9L19.2,22.6A0.6,0.6 0 0,1 18.3,22.6L13.7,17.7A2.7,2.7 0 0,1 15.7,13.1ZM15.4,14.6A0.85,0.85 0 1,0 15.4,16.3A0.85,0.85 0 1,0 15.4,14.6Z"/></svg>
<div class="t" style="left:85.48px;top:5.5px;letter-spacing:0.504px;">Change double property</div>
<div class="t" style="left:322.48px;top:5.5px;letter-spacing:0.536px;width:472.52px;overflow:hidden">Command changes the value of a property with the double type</div>
<div class="hb" style="left:797px"></div><div class="hb" style="left:1034px"></div>
<div class="t" style="left:1268.53px;top:5.5px;letter-spacing:0.399px;">System</div>
</div>
<div class="r" style="top:640px">
<svg class="ic" style="width:16px;height:16px;" viewBox="0 0 24 24"><path fill="#fff" fill-rule="evenodd" d="M13,9V3.5L18.5,9M6,2C4.89,2 4,2.89 4,4V20A2,2 0 0,0 6,22H18A2,2 0 0,0 20,20V8L14,2H6Z"/></svg>
<div class="t" style="left:85.51px;top:5.5px;letter-spacing:0.128px;">Open File</div>
<div class="t" style="left:322.48px;top:5.5px;letter-spacing:0.444px;width:472.52px;overflow:hidden">Command that opens a file</div>
<div class="eb"><svg class="ic" style="width:16.2px;height:16.2px;" viewBox="0 0 24 24"><path fill="#fff" fill-rule="evenodd" d="M20.71,7.04C21.1,6.65 21.1,6 20.71,5.63L18.37,3.29C18,2.9 17.35,2.9 16.96,3.29L15.12,5.12L18.87,8.87M3,17.25V21H6.75L17.81,9.93L14.06,6.18L3,17.25Z"/></svg></div>
<div class="abs" style="left:831px;top:15.3px;width:5.3px;height:1.6px;background:#fff"></div>
<div class="t" style="left:1032.53px;top:5.5px;letter-spacing:0.402px;">Ctrl+O</div>
<div class="t" style="left:1268.53px;top:5.5px;letter-spacing:0.399px;">System</div>
</div>
<div class="r" style="top:672px">
<svg class="ic" style="width:16px;height:16px;" viewBox="0 0 24 24"><path fill="#fff" fill-rule="evenodd" d="M7.8,1.3H12A1.6,1.6 0 0,1 13.6,2.9V5.5L16.6,7A2,2 0 0,1 17.8,8.8V12.2L14.7,12.5A3.1,3.1 0 0,0 12.6,17.4L15.4,22.4H3.7A2,2 0 0,1 1.7,20.4V9A2,2 0 0,1 3,7.2L6.2,5.5V2.9A1.6,1.6 0 0,1 7.8,1.3ZM8.7,3.8V5.1H11.1V3.8ZM8.7,9.3L12.1,11.2L8.7,13.1ZM4.4,15.2H12L11.7,16.3H7.7L6.6,18L5.6,16.3H4.4ZM15.7,13.1L22.9,18A0.6,0.6 0 0,1 22.95,18.9L19.2,22.6A0.6,0.6 0 0,1 18.3,22.6L13.7,17.7A2.7,2.7 0 0,1 15.7,13.1ZM15.4,14.6A0.85,0.85 0 1,0 15.4,16.3A0.85,0.85 0 1,0 15.4,14.6Z"/></svg>
<div class="t" style="left:85.48px;top:5.5px;letter-spacing:0.457px;">Change enum property</div>
<div class="t" style="left:322.48px;top:5.5px;letter-spacing:0.486px;width:472.52px;overflow:hidden">Command changes the enum property</div>
<div class="hb" style="left:797px"></div><div class="hb" style="left:1034px"></div>
<div class="t" style="left:1268.53px;top:5.5px;letter-spacing:0.399px;">System</div>
</div>
<div class="r" style="top:704px">
<svg class="ic" style="width:16px;height:16px;" viewBox="0 0 24 24"><path fill="#fff" fill-rule="evenodd" d="M7.8,1.3H12A1.6,1.6 0 0,1 13.6,2.9V5.5L16.6,7A2,2 0 0,1 17.8,8.8V12.2L14.7,12.5A3.1,3.1 0 0,0 12.6,17.4L15.4,22.4H3.7A2,2 0 0,1 1.7,20.4V9A2,2 0 0,1 3,7.2L6.2,5.5V2.9A1.6,1.6 0 0,1 7.8,1.3ZM8.7,3.8V5.1H11.1V3.8ZM8.7,9.3L12.1,11.2L8.7,13.1ZM4.4,15.2H12L11.7,16.3H7.7L6.6,18L5.6,16.3H4.4ZM15.7,13.1L22.9,18A0.6,0.6 0 0,1 22.95,18.9L19.2,22.6A0.6,0.6 0 0,1 18.3,22.6L13.7,17.7A2.7,2.7 0 0,1 15.7,13.1ZM15.4,14.6A0.85,0.85 0 1,0 15.4,16.3A0.85,0.85 0 1,0 15.4,14.6Z"/></svg>
<div class="t" style="left:85.48px;top:5.5px;letter-spacing:0.508px;">Change bool property</div>
<div class="t" style="left:322.48px;top:5.5px;letter-spacing:0.529px;width:472.52px;overflow:hidden">Command changes the value of a property with the bool type</div>
<div class="hb" style="left:797px"></div><div class="hb" style="left:1034px"></div>
<div class="t" style="left:1268.53px;top:5.5px;letter-spacing:0.399px;">System</div>
</div>
<div class="r" style="top:736px">
<svg class="ic" style="width:16px;height:16px;" viewBox="0 0 24 24"><path fill="#fff" fill-rule="evenodd" d="M22,3H7C6.31,3 5.77,3.35 5.41,3.88L0,12L5.41,20.11C5.77,20.64 6.31,21 7,21H22A2,2 0 0,0 24,19V5A2,2 0 0,0 22,3M19,15.59L17.59,17L14,13.41L10.41,17L9,15.59L12.59,12L9,8.41L10.41,7L14,10.59L17.59,7L19,8.41L15.41,12"/></svg>
<div class="t" style="left:85.48px;top:5.5px;letter-spacing:0.014px;">Clear</div>
<div class="t" style="left:322.48px;top:5.5px;letter-spacing:0.453px;width:472.52px;overflow:hidden">Command that clears</div>
<div class="eb"><svg class="ic" style="width:16.2px;height:16.2px;" viewBox="0 0 24 24"><path fill="#fff" fill-rule="evenodd" d="M20.71,7.04C21.1,6.65 21.1,6 20.71,5.63L18.37,3.29C18,2.9 17.35,2.9 16.96,3.29L15.12,5.12L18.87,8.87M3,17.25V21H6.75L17.81,9.93L14.06,6.18L3,17.25Z"/></svg></div>
<div class="abs" style="left:831px;top:15.3px;width:5.3px;height:1.6px;background:#fff"></div>
<div class="t" style="left:1032.53px;top:5.5px;letter-spacing:0.374px;">Ctrl+Escape</div>
<div class="t" style="left:1268.53px;top:5.5px;letter-spacing:0.399px;">System</div>
</div>
<div class="r" style="top:768px">
<svg class="ic" style="width:16px;height:16px;" viewBox="0 0 24 24"><path fill="#fff" fill-rule="evenodd" d="M12,4C14.1,4 16.1,4.8 17.6,6.3C20.7,9.4 20.7,14.5 17.6,17.6C15.8,19.5 13.3,20.2 10.9,19.9L11.4,17.9C13.1,18.1 14.9,17.5 16.2,16.2C18.5,13.9 18.5,10.1 16.2,7.7C15.1,6.6 13.5,6 12,6V10.6L7,5.6L12,0.6V4M6.3,17.6C3.7,15 3.3,11 5.1,7.9L6.6,9.4C5.5,11.6 5.9,14.4 7.8,16.2C8.3,16.7 8.9,17.1 9.6,17.4L9,19.4C8,19 7.1,18.4 6.3,17.6Z"/></svg>
<div class="t" style="left:85.10px;top:5.5px;letter-spacing:0.525px;">Restart Application</div>
<div class="t" style="left:322.48px;top:5.5px;letter-spacing:0.537px;width:472.52px;overflow:hidden">Command that restarts the application</div>
<div class="hb" style="left:797px"></div><div class="hb" style="left:1034px"></div>
<div class="t" style="left:1268.53px;top:5.5px;letter-spacing:0.399px;">System</div>
</div>
<div class="r" style="top:800px">
<svg class="ic" style="width:16px;height:16px;" viewBox="0 0 24 24"><path fill="#fff" fill-rule="evenodd" d="M2.7,0.9H21.4V19.6H23V22.4H1.1V19.6H2.7ZM4.9,4.3V9.7H7.5V4.3ZM4.9,13.5V19.2H7.5V13.5ZM9.3,4.3V19.2H14.8V4.3ZM16.6,4.3V9.7H19.2V4.3ZM16.6,13.5V19.2H19.2V13.5Z"/></svg>
<div class="t" style="left:85.51px;top:5.5px;letter-spacing:0.363px;">Open Debug Window</div>
<div class="t" style="left:322.51px;top:5.5px;letter-spacing:0.358px;width:472.49px;overflow:hidden">Open Debug Window</div>
<div class="eb"><svg class="ic" style="width:16.2px;height:16.2px;" viewBox="0 0 24 24"><path fill="#fff" fill-rule="evenodd" d="M20.71,7.04C21.1,6.65 21.1,6 20.71,5.63L18.37,3.29C18,2.9 17.35,2.9 16.96,3.29L15.12,5.12L18.87,8.87M3,17.25V21H6.75L17.81,9.93L14.06,6.18L3,17.25Z"/></svg></div>
<div class="abs" style="left:831px;top:15.3px;width:5.3px;height:1.6px;background:#fff"></div>
<div class="t" style="left:1032.53px;top:5.5px;letter-spacing:0.496px;">Ctrl+D</div>
<div class="t" style="left:1268.53px;top:5.5px;letter-spacing:0.399px;">System</div>
</div>
<div class="r" style="top:832px">
<svg class="ic" style="width:16px;height:16px;" viewBox="0 0 24 24"><path fill="#fff" fill-rule="evenodd" d="M7.8,1.3H12A1.6,1.6 0 0,1 13.6,2.9V5.5L16.6,7A2,2 0 0,1 17.8,8.8V12.2L14.7,12.5A3.1,3.1 0 0,0 12.6,17.4L15.4,22.4H3.7A2,2 0 0,1 1.7,20.4V9A2,2 0 0,1 3,7.2L6.2,5.5V2.9A1.6,1.6 0 0,1 7.8,1.3ZM8.7,3.8V5.1H11.1V3.8ZM8.7,9.3L12.1,11.2L8.7,13.1ZM4.4,15.2H12L11.7,16.3H7.7L6.6,18L5.6,16.3H4.4ZM15.7,13.1L22.9,18A0.6,0.6 0 0,1 22.95,18.9L19.2,22.6A0.6,0.6 0 0,1 18.3,22.6L13.7,17.7A2.7,2.7 0 0,1 15.7,13.1ZM15.4,14.6A0.85,0.85 0 1,0 15.4,16.3A0.85,0.85 0 1,0 15.4,14.6Z"/></svg>
<div class="t" style="left:85.48px;top:5.5px;letter-spacing:0.508px;">Change string property</div>
<div class="t" style="left:322.48px;top:5.5px;letter-spacing:0.532px;width:472.52px;overflow:hidden">Command changes the value of a property with the string type</div>
<div class="hb" style="left:797px"></div><div class="hb" style="left:1034px"></div>
<div class="t" style="left:1268.53px;top:5.5px;letter-spacing:0.399px;">System</div>
</div>
</div>
<div class="abs" style="left:1722px;top:261px;width:2px;height:759px;background:#8c8c8c;border-radius:1px"></div>
<div class="abs" style="left:57px;top:1101px;width:1670px;height:26px;background:#1f1f1f"></div>
</div></div>
<div class="abs" style="left:62px;top:38px;width:1660px;height:1px;background:#c4417f"></div>
<div class="abs" style="left:62px;top:1126px;width:1660px;height:1px;background:#c4417f"></div>
<div class="abs" style="left:56px;top:44px;width:1px;height:1077px;background:#c4417f"></div>
<div class="abs" style="left:1727px;top:44px;width:1px;height:1077px;background:#c4417f"></div>
</body></html>
